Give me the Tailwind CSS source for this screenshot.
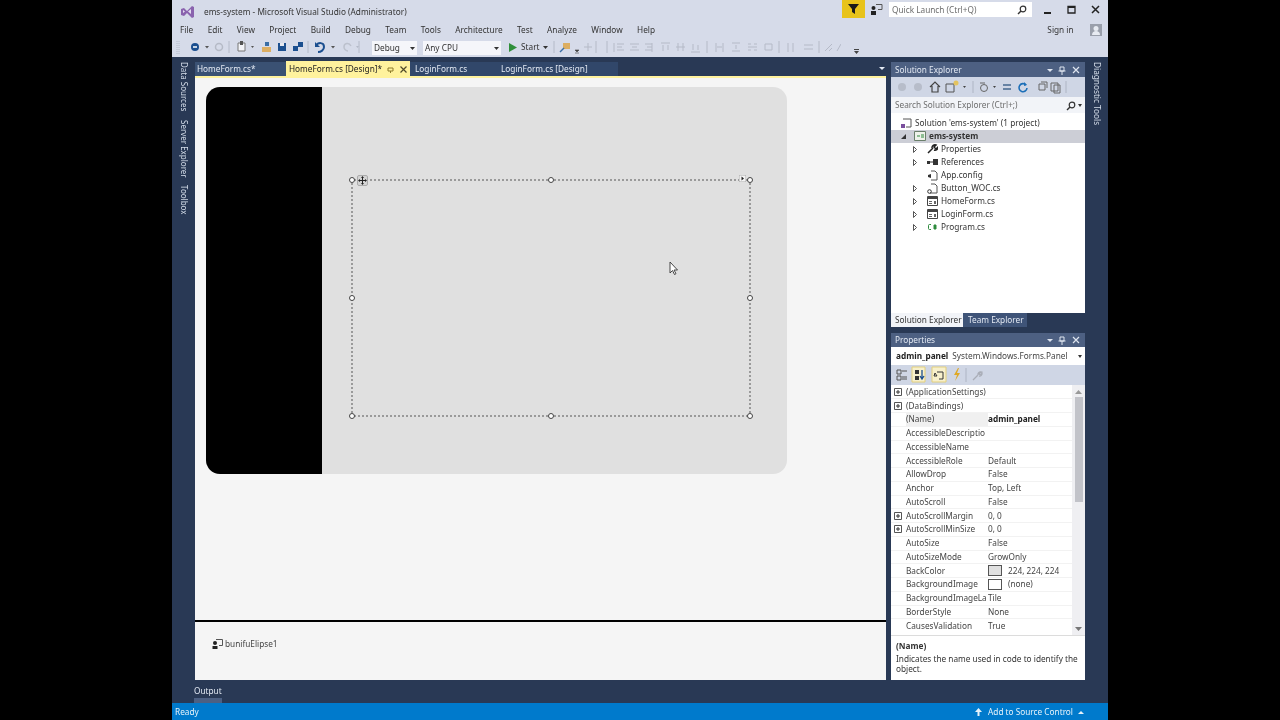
<!DOCTYPE html>
<html>

<head>
  <title>ems-system - Microsoft Visual Studio</title>
  <script src="https://cdn.jsdelivr.net/npm/@tailwindcss/browser@4"></script>
</head>

<body class="bg-black font-['Noto_Sans',sans-serif] text-[8.25px] leading-none text-[#1e1e1e] overflow-hidden whitespace-nowrap">
  <div class="ml-[172px] w-[936px] h-[720px] flex flex-col bg-[#293955] blur-[0.35px]">

    <!-- title bar -->
    <div class="h-[22px] bg-[#d6dbe9] flex items-start shrink-0">
      <svg class="w-[15px] h-[15px] ml-[8px] mt-[4px] shrink-0" viewBox="0 0 15 15">
        <path d="M1 5l3-1 3 3 5-5 2 1v10l-2 1-5-5-3 3-3-1z" fill="#8a63ae" />
        <path d="M3 6v3l2-1.5zM11 5v5L8 7.5z" fill="#e3dcef" />
      </svg>
      <span class="ml-[9px] mt-[8px] text-[#333]">ems-system - Microsoft Visual Studio (Administrator)</span>
      <div class="ml-auto flex items-start">
        <div class="w-[23px] h-[18px] bg-[#e8c31a] flex items-center justify-center">
          <svg class="w-[11px] h-[10px]" viewBox="0 0 11 10"><path d="M0 0h11L7 5v5L4 8V5z" fill="#1a1a1a" /></svg>
        </div>
        <svg class="w-[13px] h-[12px] ml-[5px] mt-[3px]" viewBox="0 0 13 12">
          <path d="M6 1.5h6v5H8" fill="none" stroke="#555" />
          <circle cx="3.5" cy="5" r="2" fill="#222" /><path d="M1 12V8h5v4z" fill="#222" />
        </svg>
        <div class="w-[143px] h-[15px] ml-[6px] mt-[2px] bg-white flex items-center px-[3px] pt-[1px] text-[#6d6d6d]">
          Quick Launch (Ctrl+Q)
          <svg class="w-[10px] h-[10px] ml-auto mr-[2px]" viewBox="0 0 10 10">
            <circle cx="6" cy="4" r="2.8" fill="none" stroke="#333" stroke-width="1.2" /><path d="M4 6L1 9" stroke="#333" stroke-width="1.5" />
          </svg>
        </div>
        <svg class="w-[9px] h-[9px] ml-[11px] mt-[6px]" viewBox="0 0 9 9"><path d="M1 7h7" stroke="#222" stroke-width="2" /></svg>
        <svg class="w-[9px] h-[9px] ml-[15px] mt-[5px]" viewBox="0 0 9 9"><path d="M1 1.5h7V8H1z" fill="none" stroke="#222" stroke-width="1.3" /><path d="M1 2h7" stroke="#222" stroke-width="2" /></svg>
        <svg class="w-[9px] h-[9px] ml-[15px] mr-[8px] mt-[5px]" viewBox="0 0 9 9"><path d="M1 1l7 7M8 1L1 8" stroke="#222" stroke-width="1.5" /></svg>
      </div>
    </div>

    <!-- menu -->
    <div class="h-[16px] bg-[#d6dbe9] flex items-center pl-[8px] gap-[14.45px] text-[#333] shrink-0">
      <span>File</span><span>Edit</span><span>View</span><span>Project</span><span>Build</span><span>Debug</span><span>Team</span><span>Tools</span><span>Architecture</span><span>Test</span><span>Analyze</span><span>Window</span><span>Help</span>
      <span class="ml-auto">Sign in</span>
      <svg class="w-[12px] h-[12px] ml-[2px] mr-[6px]" viewBox="0 0 12 12">
        <path d="M0 0h12v12H0z" fill="#9a9fab" /><circle cx="6" cy="4.5" r="2.5" fill="#e8ebf2" /><path d="M2 11c0-3 2-4 4-4s4 1 4 4z" fill="#e8ebf2" />
      </svg>
    </div>

    <!-- toolbar -->
    <div class="h-[19px] bg-[#d6dbe9] flex items-center text-[#333] shrink-0">
      <svg class="w-[196px] h-[19px] ml-[4px] shrink-0" viewBox="176 38 196 19">
        <path d="M177 41v14M179 41v14" stroke="#b4bac8" stroke-dasharray="1 1" />
        <circle cx="195" cy="47" r="4" fill="#1b4f8f" /><path d="M193 47h4" stroke="#fff" stroke-width="1.5" />
        <path d="M205 46h4l-2 2.5z" fill="#555" />
        <circle cx="219" cy="47" r="3.5" fill="none" stroke="#b5bac6" stroke-width="1.5" />
        <path d="M229 41v12M359 41v12M308 41v12" stroke="#b4bac8" />
        <path d="M238 43h7v8h-7z" fill="#f3f4f8" stroke="#777" /><path d="M240 41h3v4h-3z" fill="#555" />
        <path d="M251 46h3l-1.5 2z" fill="#555" />
        <path d="M262 47h9v5h-9z" fill="#dcae62" /><path d="M265 42h4v4h-4z" fill="#3a6ea5" />
        <path d="M278 43h8v8h-8z" fill="#1b4f8f" /><path d="M280 43h4v3h-4z" fill="#e6e9f0" />
        <path d="M293 46h5v5h-5z" fill="#1b4f8f" /><path d="M298 42h5v5h-5z" fill="#1b4f8f" />
        <path d="M316 46c2-4 8-4 8 1 0 3-3 5-6 5" fill="none" stroke="#1b4f8f" stroke-width="2" /><path d="M315 42v5h5z" fill="#1b4f8f" />
        <path d="M331 46h4l-2 2.5z" fill="#555" />
        <path d="M351 46c-2-4-7-3-7 1 0 2 2 4 4 4" fill="none" stroke="#bcc1cd" stroke-width="1.5" />
        <path d="M356 46h3l-1.5 2z" fill="#b4bac8" />
      </svg>
      <div class="w-[45px] h-[14px] bg-[#f5f6fa] flex items-center pl-[2px] pt-[1px] shrink-0">Debug
        <svg class="w-[5px] h-[3px] ml-auto mr-[2px]" viewBox="0 0 5 3"><path d="M0 0h5L2.5 3z" fill="#333" /></svg>
      </div>
      <div class="w-[78px] h-[14px] bg-[#f5f6fa] flex items-center pl-[2px] pt-[1px] ml-[6px] shrink-0">Any CPU
        <svg class="w-[5px] h-[3px] ml-auto mr-[2px]" viewBox="0 0 5 3"><path d="M0 0h5L2.5 3z" fill="#333" /></svg>
      </div>
      <svg class="w-[8px] h-[9px] ml-[8px] shrink-0" viewBox="0 0 8 9"><path d="M0 0l8 4.5L0 9z" fill="#2f8f3a" /></svg>
      <span class="ml-[4px] w-[18px]">Start</span>
      <svg class="w-[5px] h-[3px] ml-[4px] shrink-0" viewBox="0 0 5 3"><path d="M0 0h5L2.5 3z" fill="#333" /></svg>
      <svg class="w-[290px] h-[19px] ml-[3px] shrink-0" viewBox="549 38 290 19">
        <path d="M552 41v12M605 41v12" stroke="#b4bac8" />
        <path d="M561 43h7v6h-7z" fill="#dcae62" /><path d="M558 52l4-4" stroke="#3a6ea5" stroke-width="1.5" />
        <path d="M573 50h4l-2 2zM573 53h4" fill="#444" stroke="#444" stroke-width=".6" />
        <g stroke="#b5bac7" fill="none">
          <path d="M582 47h8M586 43v8M594 41v12" />
          <path d="M612 43v9M615 44h7M615 47h5M615 50h7" />
          <path d="M628 44h9M630 47h5M628 50h9" />
          <path d="M650 43v9M643 44h7M645 47h5M643 50h7" />
          <path d="M659 43h9M661 45v6M666 45v5" />
          <path d="M674 47h9M676 43v8M681 43v8" />
          <path d="M689 52h9M691 44v6M696 45v5" />
          <path d="M705 41v12M714 43v9M721 43v9M715 47h5" />
          <path d="M730 43h8M730 51h8M734 45v4" />
          <path d="M746 44h3M752 44h3M746 50h3M752 50h3M746 47h9" />
          <path d="M763 44h7v6h-7z" />
          <path d="M777 41v12M786 43v9M791 43v9" />
          <path d="M802 45h9M802 49h9" />
          <path d="M817 41v12M823 51l7-7M827 51l3-3" />
          <path d="M835 51l4-7" />
        </g>
      </svg>
      <svg class="w-[7px] h-[6px] ml-[12px] mt-[9px] shrink-0" viewBox="0 0 7 6"><path d="M1 0h5v1H1zM1 2h5L3.5 5z" fill="#444" /></svg>
    </div>

    <!-- main area -->
    <div class="flex-1 flex min-h-0">

      <!-- left rail -->
      <div class="w-[23px] shrink-0 pt-[5px] flex flex-col items-center text-[8px] text-[#d7dfeb]">
        <span class="[writing-mode:vertical-rl]">Data Sources</span>
        <span class="[writing-mode:vertical-rl] mt-[9px]">Server Explorer</span>
        <span class="[writing-mode:vertical-rl] mt-[7px]">Toolbox</span>
      </div>

      <!-- document well -->
      <div class="w-[691px] shrink-0 flex flex-col">
        <div class="h-[19px] flex items-end text-[#e3e9f3] shrink-0 relative">
          <div class="w-[91px] h-[14px] bg-[#3a5173] pl-[2px] pt-[1px] flex items-center">HomeForm.cs*</div>
          <div class="w-[124px] h-[15px] bg-[#fff29d] pl-[3px] pt-[1px] flex items-center text-[#222]">HomeForm.cs [Design]*
            <svg class="w-[7px] h-[7px] ml-auto mr-[6px]" viewBox="0 0 7 7"><path d="M1 2h5v3H1zM3.5 5v2" fill="none" stroke="#8c7a2a" /></svg>
            <svg class="w-[7px] h-[7px] mr-[3px]" viewBox="0 0 7 7"><path d="M.5.5l6 6M6.500.5l-6 6" stroke="#4f4a2a" stroke-width="1.2" /></svg>
          </div>
          <div class="w-[86px] h-[14px] bg-[#31476a] pl-[5px] pt-[1px] flex items-center">LoginForm.cs</div>
          <div class="w-[122px] h-[14px] bg-[#31476a] pl-[5px] pt-[1px] flex items-center">LoginForm.cs [Design]</div>
          <svg class="w-[6px] h-[3px] ml-auto mr-[1px] mb-[6px]" viewBox="0 0 6 3"><path d="M0 0h6L3 3z" fill="#e3e9f3" /></svg>
        </div>
        <div class="h-[2px] bg-[#fff29d] shrink-0"></div>

        <!-- design surface -->
        <div class="h-[542px] bg-[#f5f5f5] pl-[11px] pt-[9px] shrink-0 relative">
          <div class="w-[581px] h-[387px] bg-[#e0e0e0] rounded-[14px] overflow-hidden flex">
            <div class="w-[116px] bg-black shrink-0"></div>
            <div class="pl-[29px] pt-[92px]">
              <!-- selected panel -->
              <div class="w-[400px] h-[238px] border-2 border-dotted border-[#9a9a9a] relative">
                <div class="absolute -left-[4px] -top-[4px] w-[6px] h-[6px] rounded-full bg-white border border-[#444]"></div>
                <div class="absolute left-[195px] -top-[4px] w-[6px] h-[6px] rounded-full bg-white border border-[#444]"></div>
                <div class="absolute -right-[4px] -top-[4px] w-[6px] h-[6px] rounded-full bg-white border border-[#444]"></div>
                <div class="absolute -left-[4px] top-[114px] w-[6px] h-[6px] rounded-full bg-white border border-[#444]"></div>
                <div class="absolute -right-[4px] top-[114px] w-[6px] h-[6px] rounded-full bg-white border border-[#444]"></div>
                <div class="absolute -left-[4px] -bottom-[4px] w-[6px] h-[6px] rounded-full bg-white border border-[#444]"></div>
                <div class="absolute left-[195px] -bottom-[4px] w-[6px] h-[6px] rounded-full bg-white border border-[#444]"></div>
                <div class="absolute -right-[4px] -bottom-[4px] w-[6px] h-[6px] rounded-full bg-white border border-[#444]"></div>
                <!-- move glyph -->
                <svg class="absolute left-[4px] -top-[6px] w-[11px] h-[11px]" viewBox="0 0 11 11">
                  <rect x=".5" y=".5" width="10" height="10" rx="1.5" fill="#d4d4d4" stroke="#aaa" />
                  <path d="M5.5 2v7M2 5.500h7" stroke="#222" />
                  <path d="M5.5 1L4 3h3zM5.500 10L4 8h3zM1 5.500l2-1.500v3zM10 5.500L8 4v3z" fill="#222" />
                </svg>
                <!-- smart tag -->
                <svg class="absolute right-[3px] -top-[6px] w-[7px] h-[7px]" viewBox="0 0 7 7">
                  <rect width="7" height="7" fill="#f4f4f4" stroke="#aaa" /><path d="M2.500 1.500l2.500 2-2.500 2z" fill="#222" />
                </svg>
              </div>
            </div>
          </div>
          <!-- mouse pointer -->
          <svg class="absolute left-[474px] top-[183px] w-[10px] h-[15px]" viewBox="0 0 10 15">
            <path d="M1 1v11l2.500-2.500 2 4 1.500-.8-2-3.700h3.500z" fill="#fff" stroke="#333" stroke-width=".9" />
          </svg>
        </div>
        <div class="h-[2px] bg-black shrink-0"></div>

        <!-- component tray -->
        <div class="h-[58px] bg-[#f5f5f5] shrink-0 pl-[17px] pt-[16px] flex items-start text-[#444]">
          <svg class="w-[11px] h-[11px] shrink-0" viewBox="0 0 11 11">
            <path d="M4 1.500h6.500v6H7" fill="none" stroke="#555" />
            <circle cx="3" cy="5" r="2" fill="#222" /><path d="M.5 11V8h5v3z" fill="#222" />
          </svg>
          <span class="ml-[2px] mt-[2px]">bunifuElipse1</span>
        </div>
        <div class="flex-1 text-[#e3e9f3]">
          <span class="inline-block -ml-[1px] h-[23px] pt-[7px] border-b-[5px] border-[#4d6082]">Output</span>
        </div>
      </div>

      <!-- tool windows -->
      <div class="w-[194px] ml-[5px] shrink-0 pt-[5px] flex flex-col">
        <div class="h-[15px] bg-[#4d6082] flex items-center pl-[4px] pt-[1px] text-[#e3e9f3] shrink-0">
          Solution Explorer
          <svg class="w-[36px] h-[9px] ml-auto mr-[3px]" viewBox="0 0 36 9">
            <path d="M1 3h6L4 6z" fill="#dfe5ef" />
            <path d="M14 1h4v4h-4zM12.500 5h7M16 5v4" fill="none" stroke="#dfe5ef" />
            <path d="M27 1l6 6M33 1l-6 6" stroke="#dfe5ef" stroke-width="1.2" />
          </svg>
        </div>
        <div class="h-[20px] bg-[#cfd6e5] shrink-0">
          <svg class="w-[194px] h-[20px]" viewBox="891 77 194 20">
            <circle cx="902" cy="87" r="4" fill="#b7bdca" /><circle cx="918" cy="87" r="4" fill="#b7bdca" />
            <path d="M930 87l5-5 5 5M932 86v6h6v-6" fill="none" stroke="#444" stroke-width="1.2" />
            <path d="M946 84h8v8h-8z" fill="none" stroke="#555" /><circle cx="956" cy="83" r="2.500" fill="#e4c35e" />
            <path d="M963 86h3l-1.500 2z" fill="#444" />
            <path d="M973 81v12" stroke="#aeb5c4" />
            <circle cx="984" cy="88" r="3.500" fill="none" stroke="#666" /><path d="M980 83h5" stroke="#666" />
            <path d="M993 86h3l-1.500 2z" fill="#444" />
            <path d="M1003 85h8M1003 89h8" stroke="#46688f" stroke-width="1.5" />
            <path d="M1026 85a4 4 0 1 0 1 3" fill="none" stroke="#1c6fb8" stroke-width="1.6" /><path d="M1024 82l3 3-3 1z" fill="#1c6fb8" />
            <path d="M1039 84h6v6h-6zM1041 82h6v6" fill="none" stroke="#666" />
            <path d="M1051 83h7v8h-7zM1054 85h6v8h-6z" fill="none" stroke="#666" /><path d="M1066 81v12" stroke="#aeb5c4" />
          </svg>
        </div>
        <div class="h-[16px] bg-[#f2f4f8] flex items-center pl-[4px] pt-[1px] text-[#6d6d6d] shrink-0">
          Search Solution Explorer (Ctrl+;)
          <svg class="w-[10px] h-[10px] ml-auto" viewBox="0 0 10 10">
            <circle cx="6" cy="4" r="2.800" fill="none" stroke="#333" stroke-width="1.2" /><path d="M4 6L1 9" stroke="#333" stroke-width="1.5" />
          </svg>
          <svg class="w-[4px] h-[3px] ml-[2px] mr-[3px]" viewBox="0 0 4 3"><path d="M0 0h4L2 3z" fill="#333" /></svg>
        </div>
        <div class="h-[200px] bg-white pt-[3.500px] shrink-0 text-[#333]">
          <div class="h-[13px] flex items-center pl-[10px]">
            <svg class="w-[11px] h-[11px] shrink-0" viewBox="0 0 11 11"><path d="M2 1h8v8H5" fill="none" stroke="#555" /><path d="M0 6h4v4H0z" fill="#7a4f9d" /></svg>
            <span class="ml-[3px]">Solution 'ems-system' (1 project)</span>
          </div>
          <div class="h-[13px] flex items-center pl-[10px] bg-[#ccced6]">
            <svg class="w-[5px] h-[5px] shrink-0" viewBox="0 0 5 5"><path d="M5 0v5H0z" fill="#333" /></svg>
            <svg class="w-[12px] h-[10px] ml-[8px] shrink-0" viewBox="0 0 12 10"><path d="M.5.5h11v9H.5z" fill="#eef2ea" stroke="#6b7f6b" /><path d="M3 5h3M7 4h3M7 6h3" stroke="#2e8b3d" /></svg>
            <span class="ml-[3px] font-bold">ems-system</span>
          </div>
          <div class="h-[13px] flex items-center pl-[22px]">
            <svg class="w-[4px] h-[7px] shrink-0" viewBox="0 0 4 7"><path d="M.5.5l3 3-3 3z" fill="#fff" stroke="#555" /></svg>
            <svg class="w-[11px] h-[10px] ml-[10px] shrink-0" viewBox="0 0 11 10"><path d="M1 9l5-5M5 4a3 3 0 0 1 4-3L7 3l2 2 2-2a3 3 0 0 1-4 3" fill="none" stroke="#222" stroke-width="1.5" /></svg>
            <span class="ml-[3px]">Properties</span>
          </div>
          <div class="h-[13px] flex items-center pl-[22px]">
            <svg class="w-[4px] h-[7px] shrink-0" viewBox="0 0 4 7"><path d="M.5.5l3 3-3 3z" fill="#fff" stroke="#555" /></svg>
            <svg class="w-[11px] h-[6px] ml-[10px] shrink-0" viewBox="0 0 11 6"><path d="M0 2h3v3H0zM6 0h5v6H6z" fill="#333" /><path d="M3 3h3" stroke="#333" /></svg>
            <span class="ml-[3px]">References</span>
          </div>
          <div class="h-[13px] flex items-center pl-[36px]">
            <svg class="w-[11px] h-[11px] shrink-0" viewBox="0 0 11 11"><path d="M4 1h4l2 2v7H4" fill="none" stroke="#555" /><path d="M1 5l3-1v4L1 7z" fill="#333" /></svg>
            <span class="ml-[3px]">App.config</span>
          </div>
          <div class="h-[13px] flex items-center pl-[22px]">
            <svg class="w-[4px] h-[7px] shrink-0" viewBox="0 0 4 7"><path d="M.5.5l3 3-3 3z" fill="#fff" stroke="#555" /></svg>
            <svg class="w-[11px] h-[11px] ml-[10px] shrink-0" viewBox="0 0 11 11"><path d="M4 1h4l2 2v7H3" fill="none" stroke="#555" /><circle cx="2.500" cy="8.500" r="1.800" fill="none" stroke="#333" /></svg>
            <span class="ml-[3px]">Button_WOC.cs</span>
          </div>
          <div class="h-[13px] flex items-center pl-[22px]">
            <svg class="w-[4px] h-[7px] shrink-0" viewBox="0 0 4 7"><path d="M.5.5l3 3-3 3z" fill="#fff" stroke="#555" /></svg>
            <svg class="w-[11px] h-[10px] ml-[10px] shrink-0" viewBox="0 0 11 10"><path d="M.5.5h10v9H.5z" fill="#fff" stroke="#444" /><path d="M1 2h9" stroke="#444" stroke-width="2" /><path d="M2 5h3v1H2zM2 7h3v1H2zM7 5h2v3H7z" fill="#666" /></svg>
            <span class="ml-[3px]">HomeForm.cs</span>
          </div>
          <div class="h-[13px] flex items-center pl-[22px]">
            <svg class="w-[4px] h-[7px] shrink-0" viewBox="0 0 4 7"><path d="M.5.5l3 3-3 3z" fill="#fff" stroke="#555" /></svg>
            <svg class="w-[11px] h-[10px] ml-[10px] shrink-0" viewBox="0 0 11 10"><path d="M.5.5h10v9H.5z" fill="#fff" stroke="#444" /><path d="M1 2h9" stroke="#444" stroke-width="2" /><path d="M2 5h3v1H2zM2 7h3v1H2zM7 5h2v3H7z" fill="#666" /></svg>
            <span class="ml-[3px]">LoginForm.cs</span>
          </div>
          <div class="h-[13px] flex items-center pl-[22px]">
            <svg class="w-[4px] h-[7px] shrink-0" viewBox="0 0 4 7"><path d="M.5.5l3 3-3 3z" fill="#fff" stroke="#555" /></svg>
            <svg class="w-[11px] h-[8px] ml-[10px] shrink-0" viewBox="0 0 11 8"><path d="M4 1.500H2.500a1 1 0 0 0-1 1v3a1 1 0 0 0 1 1H4M6 3h4M6 5h4M7.500 1.500v5M8.500 1.500v5" fill="none" stroke="#2e8b3d" /></svg>
            <span class="ml-[3px]">Program.cs</span>
          </div>
        </div>
        <div class="h-[14px] flex shrink-0">
          <div class="w-[72px] bg-[#f2f4f8] text-[#333] flex items-center pl-[4px]">Solution Explorer</div>
          <div class="w-[64px] bg-[#3f5478] text-[#e3e9f3] flex items-center pl-[5px]">Team Explorer</div>
        </div>
        <div class="h-[6px] shrink-0"></div>

        <div class="h-[14px] bg-[#4d6082] flex items-center pl-[4px] text-[#e3e9f3] shrink-0">
          Properties
          <svg class="w-[36px] h-[9px] ml-auto mr-[3px]" viewBox="0 0 36 9">
            <path d="M1 3h6L4 6z" fill="#dfe5ef" />
            <path d="M14 1h4v4h-4zM12.500 5h7M16 5v4" fill="none" stroke="#dfe5ef" />
            <path d="M27 1l6 6M33 1l-6 6" stroke="#dfe5ef" stroke-width="1.2" />
          </svg>
        </div>
        <div class="h-[18px] bg-white flex items-center pl-[5px] pt-[1px] text-[#444] shrink-0">
          <span class="font-bold text-[#222]">admin_panel</span>
          <span class="ml-[4px]">System.Windows.Forms.Panel</span>
          <svg class="w-[4px] h-[3px] ml-auto mr-[3px]" viewBox="0 0 4 3"><path d="M0 0h4L2 3z" fill="#333" /></svg>
        </div>
        <div class="h-[20px] bg-[#cfd6e5] shrink-0">
          <svg class="w-[194px] h-[20px]" viewBox="891 365 194 20">
            <path d="M897 370h4v4h-4zM897 376h4v4h-4zM902 371h5M902 377h5M902 379h5" fill="none" stroke="#555" />
            <path d="M912 367h13v15h-13zM932 367h14v15h-14z" fill="#f7f0cc" stroke="#e2cf7d" />
            <path d="M915 370h4v4h-4zM915 376h4v4h-4z" fill="#333" /><path d="M922 370v9M920 376l2 3 2-3" fill="none" stroke="#1b4f8f" stroke-width="1.3" />
            <path d="M937 372h6v7h-4M934 376h3l-2-3z" fill="none" stroke="#333" />
            <path d="M958 368l-4 7h3l-2 6 5-8h-3l2-5z" fill="#dfa926" />
            <path d="M966 368v14" stroke="#aeb5c4" />
            <path d="M973 380l5-5M978 375a2.500 2.500 0 0 1 3-3l-2 2 2 1 1-2a2.500 2.500 0 0 1-3 3" fill="none" stroke="#a9adb7" stroke-width="1.3" />
          </svg>
        </div>

        <!-- property grid -->
        <div class="h-[250px] bg-white flex shrink-0 text-[#444]">
          <div class="flex-1 pt-[0.5px]">
            <div class="h-[13.76px] flex items-center border-b border-[#f2f2f2]">
              <svg class="w-[8px] h-[8px] ml-[3px] shrink-0" viewBox="0 0 8 8"><path d="M.5.5h7v7h-7z" fill="#fff" stroke="#555" /><path d="M2 4h4M4 2v4" stroke="#333" /></svg>
              <span class="ml-[4px] w-[82px]">(ApplicationSettings)</span>
            </div>
            <div class="h-[13.76px] flex items-center border-b border-[#f2f2f2]">
              <svg class="w-[8px] h-[8px] ml-[3px] shrink-0" viewBox="0 0 8 8"><path d="M.5.5h7v7h-7z" fill="#fff" stroke="#555" /><path d="M2 4h4M4 2v4" stroke="#333" /></svg>
              <span class="ml-[4px] w-[82px]">(DataBindings)</span>
            </div>
            <div class="h-[13.76px] flex items-center border-b border-[#f2f2f2] pl-[15px]"><span class="w-[82px] bg-[#f0f0f0] h-full flex items-center">(Name)</span><span class="font-bold text-[#222]">admin_panel</span></div>
            <div class="h-[13.76px] flex items-center border-b border-[#f2f2f2] pl-[15px]"><span class="w-[82px]">AccessibleDescriptio</span></div>
            <div class="h-[13.76px] flex items-center border-b border-[#f2f2f2] pl-[15px]"><span class="w-[82px]">AccessibleName</span></div>
            <div class="h-[13.76px] flex items-center border-b border-[#f2f2f2] pl-[15px]"><span class="w-[82px]">AccessibleRole</span><span>Default</span></div>
            <div class="h-[13.76px] flex items-center border-b border-[#f2f2f2] pl-[15px]"><span class="w-[82px]">AllowDrop</span><span>False</span></div>
            <div class="h-[13.76px] flex items-center border-b border-[#f2f2f2] pl-[15px]"><span class="w-[82px]">Anchor</span><span>Top, Left</span></div>
            <div class="h-[13.76px] flex items-center border-b border-[#f2f2f2] pl-[15px]"><span class="w-[82px]">AutoScroll</span><span>False</span></div>
            <div class="h-[13.76px] flex items-center border-b border-[#f2f2f2]">
              <svg class="w-[8px] h-[8px] ml-[3px] shrink-0" viewBox="0 0 8 8"><path d="M.5.5h7v7h-7z" fill="#fff" stroke="#555" /><path d="M2 4h4M4 2v4" stroke="#333" /></svg>
              <span class="ml-[4px] w-[82px]">AutoScrollMargin</span><span>0, 0</span>
            </div>
            <div class="h-[13.76px] flex items-center border-b border-[#f2f2f2]">
              <svg class="w-[8px] h-[8px] ml-[3px] shrink-0" viewBox="0 0 8 8"><path d="M.5.5h7v7h-7z" fill="#fff" stroke="#555" /><path d="M2 4h4M4 2v4" stroke="#333" /></svg>
              <span class="ml-[4px] w-[82px]">AutoScrollMinSize</span><span>0, 0</span>
            </div>
            <div class="h-[13.76px] flex items-center border-b border-[#f2f2f2] pl-[15px]"><span class="w-[82px]">AutoSize</span><span>False</span></div>
            <div class="h-[13.76px] flex items-center border-b border-[#f2f2f2] pl-[15px]"><span class="w-[82px]">AutoSizeMode</span><span>GrowOnly</span></div>
            <div class="h-[13.76px] flex items-center border-b border-[#f2f2f2] pl-[15px]"><span class="w-[82px]">BackColor</span><span class="w-[14px] h-[11px] bg-[#e0e0e0] border border-[#555] mr-[6px]"></span><span>224, 224, 224</span></div>
            <div class="h-[13.76px] flex items-center border-b border-[#f2f2f2] pl-[15px]"><span class="w-[82px]">BackgroundImage</span><span class="w-[14px] h-[11px] bg-white border border-[#555] mr-[6px]"></span><span>(none)</span></div>
            <div class="h-[13.76px] flex items-center border-b border-[#f2f2f2] pl-[15px]"><span class="w-[82px]">BackgroundImageLa</span><span>Tile</span></div>
            <div class="h-[13.76px] flex items-center border-b border-[#f2f2f2] pl-[15px]"><span class="w-[82px]">BorderStyle</span><span>None</span></div>
            <div class="h-[13.76px] flex items-center pl-[15px]"><span class="w-[82px]">CausesValidation</span><span>True</span></div>
          </div>
          <!-- scrollbar -->
          <div class="w-[13px] bg-[#efeff2] flex flex-col items-center shrink-0">
            <svg class="w-[7px] h-[4px] mt-[5px] shrink-0" viewBox="0 0 7 4"><path d="M3.5 0L7 4H0z" fill="#999" /></svg>
            <div class="w-[8px] h-[105px] mt-[3px] bg-[#c2c3c9]"></div>
            <svg class="w-[7px] h-[4px] mt-auto mb-[4px] shrink-0" viewBox="0 0 7 4"><path d="M0 0h7L3.5 4z" fill="#777" /></svg>
          </div>
        </div>
        <div class="h-[45px] bg-white px-[5px] pt-[5px] text-[#333] leading-[10px] shrink-0 border-t border-[#dcdcdc]">
          <div class="font-bold mb-[3px]">(Name)</div>
          <div>Indicates the name used in code to identify the<br>object.</div>
        </div>
      </div>

      <!-- right rail -->
      <div class="w-[23px] shrink-0 pt-[5px] flex flex-col items-center text-[#d7dfeb]">
        <span class="[writing-mode:vertical-rl]">Diagnostic Tools</span>
      </div>
    </div>

    <!-- status bar -->
    <div class="h-[17px] bg-[#007acc] flex items-center pl-[3px] pt-[1px] text-[#e6f2fa] shrink-0">
      <span>Ready</span>
      <svg class="w-[7px] h-[8px] ml-auto shrink-0" viewBox="0 0 7 8"><path d="M3.5 0L7 4H4.500v4h-2V4H0z" fill="#e6f2fa" /></svg>
      <span class="ml-[6px]">Add to Source Control</span>
      <svg class="w-[6px] h-[3px] ml-[5px] mr-[24px] shrink-0" viewBox="0 0 6 3"><path d="M3 0l3 3H0z" fill="#e6f2fa" /></svg>
    </div>
  </div>
</body>

</html>
